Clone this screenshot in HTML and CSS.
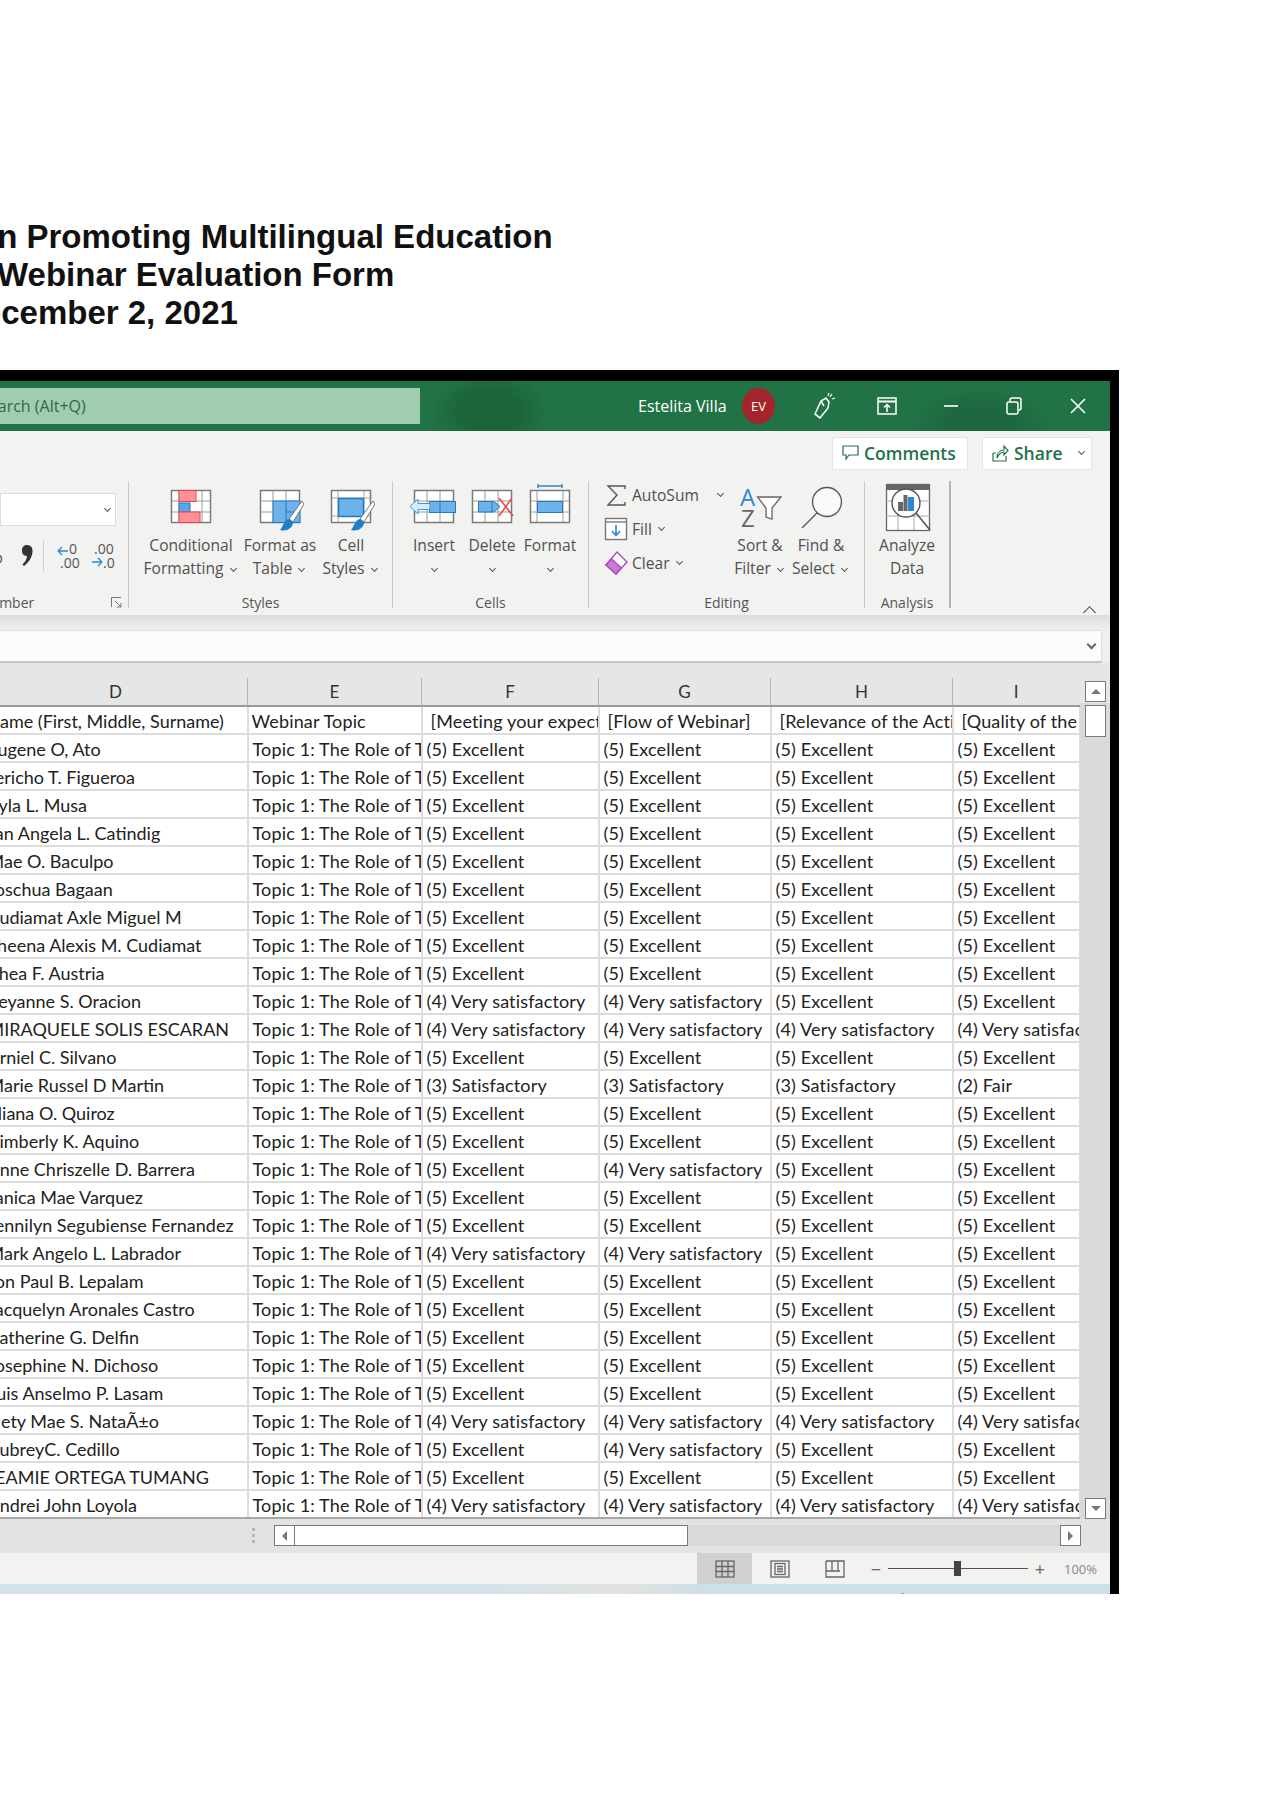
FILE: index.html
```html
<!DOCTYPE html>
<html lang="en">
<head>
    <meta charset="UTF-8">
    <title>Webinar Evaluation Form</title>
    <link rel="stylesheet" href="styles.css">
</head>
<body>

    <!-- Page heading -->
    <div class="heading">
        <div class="line-one">in Promoting Multilingual Education</div>
        <div class="line-two">Webinar Evaluation Form</div>
        <div class="line-three">December 2, 2021</div>
    </div>

    <!-- Excel window -->
    <div class="window">

        <div class="titlebar">
            <div class="search"><span>Search (Alt+Q)</span></div>
            <div class="user-name">Estelita Villa</div>
            <div class="avatar">EV</div>
            <div class="title-btn">
                <svg width="24" height="28" viewBox="0 0 24 28" fill="none" stroke="#fff" stroke-width="1.5"><path d="M3 22L9 9L14 6L17 10L16 16L8 26Z"/><path d="M3 22L8 26M12 14L9 9"/><path d="M18 5L20 2M20 7L23 6M16 4L17 1" stroke-width="1.2"/></svg>
            </div>
            <div class="title-btn">
                <svg width="20" height="18" viewBox="0 0 20 18" fill="none" stroke="#fff" stroke-width="1.5"><rect x="1" y="1" width="18" height="16"/><path d="M1 4.5H19" stroke-width="2"/><path d="M10 15V8M7 10.5L10 7.5L13 10.5"/></svg>
            </div>
            <div class="title-btn">
                <svg width="16" height="4" viewBox="0 0 16 4"><path d="M1 2H15" stroke="#fff" stroke-width="1.6"/></svg>
            </div>
            <div class="title-btn">
                <svg width="16" height="18" viewBox="0 0 16 18" fill="none" stroke="#fff" stroke-width="1.5"><rect x="1" y="5" width="11" height="12" rx="2"/><path d="M4 4V3Q4 1 6 1H13Q15 1 15 3V11Q15 13 13 13"/></svg>
            </div>
            <div class="title-btn">
                <svg width="16" height="16" viewBox="0 0 16 16"><path d="M1 1L15 15M15 1L1 15" stroke="#fff" stroke-width="1.6"/></svg>
            </div>
        </div>

        <div class="ribbon">
            <div class="ribbon-top">
                <div class="top-btn comments">
                    <svg width="17" height="17" viewBox="0 0 17 17" fill="none" stroke="#217346" stroke-width="1.2"><path d="M1 2H16V11H7L4 15V11H1Z"/></svg>
                    Comments
                </div>
                <div class="top-btn share">
                    <svg width="17" height="18" viewBox="0 0 17 18" fill="none" stroke="#217346" stroke-width="1.2"><path d="M1 9V17H14V12M1 9L4 9M5 14C5 9 8 6 12 6V2L16 6.5L12 11V8C9 8 7 10 5 14Z"/></svg>
                    Share <span class="chev chev-share"></span>
                </div>
            </div>

            <div class="groups">
                <!-- Number -->
                <div class="group group-number">
                    <div class="number-select"><span class="chev"></span></div>
                    <div class="number-row">
                        <span class="percent">%</span>
                        <svg class="comma" width="12" height="24" viewBox="0 0 12 24"><path d="M6 1C10 1 12 4 11.500 8C11 14 7 19 3 22L1.500 20.500C4 18 6 15 6 12C2 12 1 9 1 6.500C1 3 3 1 6 1Z" fill="#333"/></svg>
                        <span class="number-sep"></span>
                        <svg width="24" height="30" viewBox="0 0 24 30" class="decimal">
                            <text x="12" y="13" class="dec-text">0</text>
                            <text x="3" y="27" class="dec-text">.00</text>
                            <path d="M1 10H11M1 10L5 6M1 10L5 14" stroke="#2b88d8" stroke-width="1.400" fill="none"/>
                        </svg>
                        <svg width="24" height="30" viewBox="0 0 24 30" class="decimal decimal-last">
                            <text x="3" y="13" class="dec-text">.00</text>
                            <text x="12" y="27" class="dec-text">.0</text>
                            <path d="M1 21H11M11 21L7 17M11 21L7 25" stroke="#2b88d8" stroke-width="1.400" fill="none"/>
                        </svg>
                    </div>
                    <div class="group-label number-label">
                        <span>Number</span>
                        <svg width="11" height="11" viewBox="0 0 11 11" fill="none" stroke="#777"><path d="M0.500 10V0.500H10M4 4L10 10M6 10H10V6"/></svg>
                    </div>
                </div>

                <!-- Styles -->
                <div class="group group-styles">
                    <div class="big-row">
                        <div class="big-btn w96">
                            <svg width="44" height="52" viewBox="0 0 44 52">
                                <rect x="2.500" y="9.500" width="39" height="32" fill="#fff" stroke="#7a7a7a" stroke-width="1.500"/>
                                <path d="M10 10V41M33 10V41M3 20H41M3 31H41" stroke="#9a9a9a"/>
                                <rect x="10" y="9.500" width="17" height="11" fill="#ff9097" stroke="#e8474f"/>
                                <rect x="10" y="22" width="11" height="9" fill="#5aa5e2" stroke="#2579c4"/>
                                <rect x="10" y="31" width="21" height="10.500" fill="#ff9097" stroke="#e8474f"/>
                            </svg>
                            <div>Conditional</div>
                            <div>Formatting <span class="chev"></span></div>
                        </div>
                        <div class="big-btn w82">
                            <svg width="48" height="52" viewBox="0 0 48 52">
                                <rect x="4.500" y="9.500" width="39" height="32" fill="#fff" stroke="#7a7a7a" stroke-width="1.500"/>
                                <path d="M17 10V41M30 10V41M5 20H43M5 31H43" stroke="#9a9a9a"/>
                                <rect x="17" y="20" width="27" height="21.500" fill="#6db2ea" stroke="#2579c4"/>
                                <path d="M30 31H44M30 20V41" stroke="#2579c4"/>
                                <path d="M46 20L33 38L37 41L48 23Z" fill="#fff" stroke="#777"/>
                                <path d="M33 38C28 39 28 44 24 49C31 51 37 47 37 41Z" fill="#1f7fc9"/>
                            </svg>
                            <div>Format as</div>
                            <div>Table <span class="chev"></span></div>
                        </div>
                        <div class="big-btn w60">
                            <svg width="48" height="52" viewBox="0 0 48 52">
                                <rect x="4.500" y="9.500" width="39" height="32" fill="#fff" stroke="#7a7a7a" stroke-width="1.500"/>
                                <path d="M5 17H43M5 35H43M11 10V41M37 10V41" stroke="#a8a8a8"/>
                                <rect x="11.500" y="17.500" width="25" height="18" fill="#6db2ea" stroke="#2579c4" stroke-width="1.500"/>
                                <path d="M46 20L33 38L37 41L48 23Z" fill="#fff" stroke="#777"/>
                                <path d="M33 38C28 39 28 44 24 49C31 51 37 47 37 41Z" fill="#1f7fc9"/>
                            </svg>
                            <div>Cell</div>
                            <div>Styles <span class="chev"></span></div>
                        </div>
                    </div>
                    <div class="group-label">Styles</div>
                </div>

                <!-- Cells -->
                <div class="group group-cells">
                    <div class="big-row">
                        <div class="big-btn w58">
                            <svg width="52" height="52" viewBox="0 0 52 52">
                                <rect x="6.500" y="9.500" width="39" height="32" fill="#fff" stroke="#7a7a7a" stroke-width="1.500"/>
                                <path d="M19 10V41M32 10V41M7 20H45M7 31H45" stroke="#9a9a9a"/>
                                <rect x="21.500" y="20.500" width="26" height="11" fill="#6db2ea" stroke="#2579c4"/>
                                <path d="M32 20V31" stroke="#2579c4"/>
                                <path d="M22 22.500H10V18L2 25.500L10 33V28.500H22Z" fill="#d7ebfa" stroke="#3a9ad9"/>
                            </svg>
                            <div>Insert</div>
                            <div><span class="chev"></span></div>
                        </div>
                        <div class="big-btn w58">
                            <svg width="52" height="52" viewBox="0 0 52 52">
                                <rect x="6.500" y="9.500" width="39" height="32" fill="#fff" stroke="#7a7a7a" stroke-width="1.500"/>
                                <path d="M19 10V41M32 10V41M7 20H45M7 31H45" stroke="#9a9a9a"/>
                                <path d="M12.500 20.500H28L34 25.500L28 31H12.500Z" fill="#6db2ea" stroke="#2579c4"/>
                                <path d="M26 20V31" stroke="#2579c4"/>
                                <path d="M33 17L47 35M46 17L33 35" stroke="#ee4a50" stroke-width="1.600"/>
                            </svg>
                            <div>Delete</div>
                            <div><span class="chev"></span></div>
                        </div>
                        <div class="big-btn w58">
                            <svg width="52" height="52" viewBox="0 0 52 52">
                                <path d="M14 5H38M14 3V7M38 3V7" stroke="#2e86c9" stroke-width="1.400"/>
                                <rect x="6.500" y="9.500" width="39" height="32" fill="#fff" stroke="#7a7a7a" stroke-width="1.500"/>
                                <path d="M13 10V41M39 10V41M7 20H45M7 31H45" stroke="#9a9a9a"/>
                                <rect x="13.500" y="20.500" width="25" height="11" fill="#6db2ea" stroke="#2579c4"/>
                            </svg>
                            <div>Format</div>
                            <div><span class="chev"></span></div>
                        </div>
                    </div>
                    <div class="group-label">Cells</div>
                </div>

                <!-- Editing -->
                <div class="group group-editing">
                    <div class="big-row">
                        <div class="small-stack">
                            <div class="small-btn">
                                <svg width="24" height="26" viewBox="0 0 24 26" fill="none" stroke="#555" stroke-width="1.400"><path d="M21 7V4H4L13 13L4 23H21V20"/></svg>
                                AutoSum <span class="chev chev-auto"></span>
                            </div>
                            <div class="small-btn">
                                <svg width="24" height="24" viewBox="0 0 24 24"><rect x="1.500" y="1.500" width="21" height="21" fill="#fff" stroke="#777" stroke-width="1.400"/><path d="M2 5H22" stroke="#777" stroke-width="1.400"/><path d="M12 8V18M8 14L12 18.500L16 14" fill="none" stroke="#2b88d8" stroke-width="1.600"/></svg>
                                Fill <span class="chev"></span>
                            </div>
                            <div class="small-btn">
                                <svg width="24" height="26" viewBox="0 0 24 26"><path d="M13 2L23 12L12 24L2 15Z" fill="#fff" stroke="#b146c2" stroke-width="1.400"/><path d="M7.500 9L17.500 18L12 24L2 15Z" fill="#c77bd3" stroke="#b146c2" stroke-width="1.400"/></svg>
                                Clear <span class="chev"></span>
                            </div>
                        </div>
                        <div class="big-btn w62">
                            <svg width="44" height="52" viewBox="0 0 44 52">
                                <text x="2" y="25" class="sort-a">A</text>
                                <text x="3" y="46" class="sort-z">Z</text>
                                <path d="M19.500 16H43L34 27V38L28 36V27Z" fill="#fff" stroke="#666" stroke-width="1.300"/>
                            </svg>
                            <div>Sort &amp;</div>
                            <div>Filter <span class="chev"></span></div>
                        </div>
                        <div class="big-btn w60">
                            <svg width="48" height="52" viewBox="0 0 48 52">
                                <circle cx="30" cy="21" r="14.500" fill="#f9f9f9" stroke="#555" stroke-width="1.300"/>
                                <path d="M20 32L5 47" stroke="#555" stroke-width="1.300"/>
                            </svg>
                            <div>Find &amp;</div>
                            <div>Select <span class="chev"></span></div>
                        </div>
                    </div>
                    <div class="group-label">Editing</div>
                </div>

                <!-- Analysis -->
                <div class="group group-analysis">
                    <div class="big-row">
                        <div class="big-btn w86">
                            <svg width="50" height="52" viewBox="0 0 50 52">
                                <rect x="4.500" y="3.500" width="43" height="46" fill="#fff" stroke="#666" stroke-width="1.300"/>
                                <rect x="4" y="3" width="44" height="6" fill="#666"/>
                                <path d="M4 20H48M4 35H48M16 9V49M32 9V49" stroke="#aaa"/>
                                <circle cx="24" cy="22" r="14" fill="#fff" stroke="#555" stroke-width="1.400"/>
                                <rect x="16" y="21" width="5" height="9" fill="#666"/>
                                <rect x="21.500" y="14" width="4" height="16" fill="#666"/>
                                <rect x="26" y="16" width="6" height="14" fill="#2b88d8"/>
                                <path d="M34 32L48 49" stroke="#555" stroke-width="1.600"/>
                            </svg>
                            <div>Analyze</div>
                            <div>Data</div>
                        </div>
                    </div>
                    <div class="group-label">Analysis</div>
                </div>

                <div class="collapse"><span class="chev chev-up"></span></div>
            </div>
        </div>

        <div class="ribbon-shadow"></div>

        <div class="formula-bar">
            <div class="formula-box"><span class="chev chev-bold"></span></div>
        </div>

        <!-- Sheet -->
        <div class="sheet">
            <div class="grid-wrap">
                <table class="grid">
                    <colgroup>
                        <col class="col-d"><col class="col-e"><col class="col-f"><col class="col-g"><col class="col-h"><col class="col-i">
                    </colgroup>
                    <tr class="letters"><th>D</th><th>E</th><th>F</th><th>G</th><th>H</th><th>I</th></tr>
                    <tr class="head-row"><td>Name (First, Middle, Surname)</td><td class="plain">Webinar Topic</td><td>[Meeting your expectations]</td><td>[Flow of Webinar]</td><td>[Relevance of the Activity]</td><td>[Quality of the Speakers]</td></tr>
                    <tr><td>Eugene O, Ato</td><td>Topic 1: The Role of Translation</td><td>(5) Excellent</td><td>(5) Excellent</td><td>(5) Excellent</td><td>(5) Excellent</td></tr>
                    <tr><td>Jericho T. Figueroa</td><td>Topic 1: The Role of Translation</td><td>(5) Excellent</td><td>(5) Excellent</td><td>(5) Excellent</td><td>(5) Excellent</td></tr>
                    <tr><td>Kyla L. Musa</td><td>Topic 1: The Role of Translation</td><td>(5) Excellent</td><td>(5) Excellent</td><td>(5) Excellent</td><td>(5) Excellent</td></tr>
                    <tr><td>Jan Angela L. Catindig</td><td>Topic 1: The Role of Translation</td><td>(5) Excellent</td><td>(5) Excellent</td><td>(5) Excellent</td><td>(5) Excellent</td></tr>
                    <tr><td>Mae O. Baculpo</td><td>Topic 1: The Role of Translation</td><td>(5) Excellent</td><td>(5) Excellent</td><td>(5) Excellent</td><td>(5) Excellent</td></tr>
                    <tr><td>Joschua Bagaan</td><td>Topic 1: The Role of Translation</td><td>(5) Excellent</td><td>(5) Excellent</td><td>(5) Excellent</td><td>(5) Excellent</td></tr>
                    <tr><td>Cudiamat Axle Miguel M</td><td>Topic 1: The Role of Translation</td><td>(5) Excellent</td><td>(5) Excellent</td><td>(5) Excellent</td><td>(5) Excellent</td></tr>
                    <tr><td>Sheena Alexis M. Cudiamat</td><td>Topic 1: The Role of Translation</td><td>(5) Excellent</td><td>(5) Excellent</td><td>(5) Excellent</td><td>(5) Excellent</td></tr>
                    <tr><td>Rhea F. Austria</td><td>Topic 1: The Role of Translation</td><td>(5) Excellent</td><td>(5) Excellent</td><td>(5) Excellent</td><td>(5) Excellent</td></tr>
                    <tr><td>Reyanne S. Oracion</td><td>Topic 1: The Role of Translation</td><td>(4) Very satisfactory</td><td>(4) Very satisfactory</td><td>(5) Excellent</td><td>(5) Excellent</td></tr>
                    <tr><td>MIRAQUELE SOLIS ESCARAN</td><td>Topic 1: The Role of Translation</td><td>(4) Very satisfactory</td><td>(4) Very satisfactory</td><td>(4) Very satisfactory</td><td>(4) Very satisfactory</td></tr>
                    <tr><td>Arniel C. Silvano</td><td>Topic 1: The Role of Translation</td><td>(5) Excellent</td><td>(5) Excellent</td><td>(5) Excellent</td><td>(5) Excellent</td></tr>
                    <tr><td>Marie Russel D Martin</td><td>Topic 1: The Role of Translation</td><td>(3) Satisfactory</td><td>(3) Satisfactory</td><td>(3) Satisfactory</td><td>(2) Fair</td></tr>
                    <tr><td>Eliana O. Quiroz</td><td>Topic 1: The Role of Translation</td><td>(5) Excellent</td><td>(5) Excellent</td><td>(5) Excellent</td><td>(5) Excellent</td></tr>
                    <tr><td>Kimberly K. Aquino</td><td>Topic 1: The Role of Translation</td><td>(5) Excellent</td><td>(5) Excellent</td><td>(5) Excellent</td><td>(5) Excellent</td></tr>
                    <tr><td>Anne Chriszelle D. Barrera</td><td>Topic 1: The Role of Translation</td><td>(5) Excellent</td><td>(4) Very satisfactory</td><td>(5) Excellent</td><td>(5) Excellent</td></tr>
                    <tr><td>Janica Mae Varquez</td><td>Topic 1: The Role of Translation</td><td>(5) Excellent</td><td>(5) Excellent</td><td>(5) Excellent</td><td>(5) Excellent</td></tr>
                    <tr><td>Jennilyn Segubiense Fernandez</td><td>Topic 1: The Role of Translation</td><td>(5) Excellent</td><td>(5) Excellent</td><td>(5) Excellent</td><td>(5) Excellent</td></tr>
                    <tr><td>Mark Angelo L. Labrador</td><td>Topic 1: The Role of Translation</td><td>(4) Very satisfactory</td><td>(4) Very satisfactory</td><td>(5) Excellent</td><td>(5) Excellent</td></tr>
                    <tr><td>Jon Paul B. Lepalam</td><td>Topic 1: The Role of Translation</td><td>(5) Excellent</td><td>(5) Excellent</td><td>(5) Excellent</td><td>(5) Excellent</td></tr>
                    <tr><td>Jacquelyn Aronales Castro</td><td>Topic 1: The Role of Translation</td><td>(5) Excellent</td><td>(5) Excellent</td><td>(5) Excellent</td><td>(5) Excellent</td></tr>
                    <tr><td>Catherine G. Delfin</td><td>Topic 1: The Role of Translation</td><td>(5) Excellent</td><td>(5) Excellent</td><td>(5) Excellent</td><td>(5) Excellent</td></tr>
                    <tr><td>Josephine N. Dichoso</td><td>Topic 1: The Role of Translation</td><td>(5) Excellent</td><td>(5) Excellent</td><td>(5) Excellent</td><td>(5) Excellent</td></tr>
                    <tr><td>Luis Anselmo P. Lasam</td><td>Topic 1: The Role of Translation</td><td>(5) Excellent</td><td>(5) Excellent</td><td>(5) Excellent</td><td>(5) Excellent</td></tr>
                    <tr><td>Nety Mae S. NataÃ±o</td><td>Topic 1: The Role of Translation</td><td>(4) Very satisfactory</td><td>(4) Very satisfactory</td><td>(4) Very satisfactory</td><td>(4) Very satisfactory</td></tr>
                    <tr><td>AubreyC. Cedillo</td><td>Topic 1: The Role of Translation</td><td>(5) Excellent</td><td>(4) Very satisfactory</td><td>(5) Excellent</td><td>(5) Excellent</td></tr>
                    <tr><td>JEAMIE ORTEGA TUMANG</td><td>Topic 1: The Role of Translation</td><td>(5) Excellent</td><td>(5) Excellent</td><td>(5) Excellent</td><td>(5) Excellent</td></tr>
                    <tr><td>Andrei John Loyola</td><td>Topic 1: The Role of Translation</td><td>(4) Very satisfactory</td><td>(4) Very satisfactory</td><td>(4) Very satisfactory</td><td>(4) Very satisfactory</td></tr>
                </table>
            </div>
            <div class="vscroll">
                <div class="scroll-btn"><span class="tri tri-up"></span></div>
                <div class="vthumb"></div>
                <div class="vtrack"></div>
                <div class="scroll-btn"><span class="tri tri-down"></span></div>
            </div>
        </div>

        <!-- Horizontal scrollbar -->
        <div class="hscroll">
            <div class="hdots"></div>
            <div class="scroll-btn"><span class="tri tri-left"></span></div>
            <div class="hthumb"></div>
            <div class="htrack"></div>
            <div class="scroll-btn"><span class="tri tri-right"></span></div>
        </div>

        <!-- Status bar -->
        <div class="statusbar">
            <div class="view-btn view-on">
                <svg width="20" height="18" viewBox="0 0 20 18" fill="none" stroke="#666" stroke-width="1.300"><rect x="1" y="1" width="18" height="16"/><path d="M7 1V17M13 1V17M1 6.500H19M1 11.500H19"/></svg>
            </div>
            <div class="view-btn">
                <svg width="20" height="18" viewBox="0 0 20 18" fill="none" stroke="#666" stroke-width="1.300"><rect x="1" y="1" width="18" height="16"/><rect x="5" y="3.500" width="10" height="11"/><path d="M7 6.500H13M7 9H13M7 11.500H13"/></svg>
            </div>
            <div class="view-btn view-last">
                <svg width="20" height="18" viewBox="0 0 20 18" fill="none" stroke="#666" stroke-width="1.300"><path d="M1 1H19V17H1V11"/><path d="M1 11H15M1 1V11M7 1V11M13 1V11"/></svg>
            </div>
            <span class="zoom-mark">&minus;</span>
            <div class="slider"><span class="slider-thumb"></span></div>
            <span class="zoom-mark">+</span>
            <span class="zoom-pct">100%</span>
        </div>

        <div class="taskstrip"><span>Edit</span></div>
    </div>

</body>
</html>
```

FILE: styles.css
```css
body {
    margin: 0;
    padding: 0;
    background-color: #fff;
    overflow: hidden;
    font-family: "Open Sans", sans-serif;
}

/* Heading */
.heading {
    padding-top: 218px;
    font-family: "Liberation Sans", Arial, sans-serif;
    font-weight: bold;
    font-size: 33px;
    line-height: 38px;
    color: #111;
    white-space: nowrap;
}

.line-one {
    margin-left: -12px;
}

.line-two {
    margin-left: -3px;
}

.line-three {
    margin-left: -41px;
}

/* Window */
.window {
    margin-top: 38px;
    width: 1110px;
    border-top: 11px solid #000;
    border-right: 9px solid #000;
    background-color: #f1f1f1;
}

.titlebar {
    display: flex;
    align-items: center;
    height: 50px;
    background-color: #217346;
    background-image: radial-gradient(ellipse 60px 40px at 490px 30px, #1c6339 45%, transparent 100%),
        radial-gradient(ellipse 70px 40px at 980px 45px, #1d683f 50%, transparent 100%);
    color: #fff;
    white-space: nowrap;
}

.search {
    width: 420px;
    height: 36px;
    line-height: 36px;
    background-color: #a0cdb0;
    color: #2c6b4a;
    font-size: 16px;
    overflow: hidden;
    flex-shrink: 0;
}

.search span {
    margin-left: -20px;
    display: inline-block;
}

.user-name {
    margin-left: 218px;
    width: 89px;
    font-size: 16px;
    flex-shrink: 0;
}

.avatar {
    margin-left: 15px;
    margin-right: 17px;
    width: 33px;
    height: 36px;
    line-height: 36px;
    border-radius: 50%;
    background-color: #a4262c;
    text-align: center;
    font-size: 13px;
    flex-shrink: 0;
}

.title-btn {
    width: 63.500px;
    display: flex;
    justify-content: center;
    align-items: center;
    flex-shrink: 0;
}

/* Ribbon */
.ribbon {
    height: 184px;
    background-color: #f2f2f1;
    color: #505050;
    font-size: 15.600px;
}

.ribbon-top {
    height: 50px;
    display: flex;
    justify-content: flex-end;
    align-items: flex-start;
    padding-top: 6px;
    padding-right: 18px;
    gap: 14px;
    box-sizing: border-box;
}

.top-btn {
    height: 33px;
    box-sizing: border-box;
    background-color: #fff;
    border: 1px solid #e4e4e4;
    border-radius: 2px;
    color: #217346;
    font-size: 17.500px;
    font-weight: 600;
    display: flex;
    align-items: center;
    gap: 5px;
    padding-bottom: 2px;
}

.comments {
    width: 136px;
    padding-left: 9px;
}

.share {
    width: 110px;
    padding-left: 9px;
}

.groups {
    display: flex;
    height: 127px;
}

.group {
    display: flex;
    flex-direction: column;
    box-sizing: border-box;
    border-right: 1px solid #c8c8c8;
    flex-shrink: 0;
}

.group-number {
    width: 129px;
}

.group-styles {
    width: 264px;
}

.group-cells {
    width: 196px;
}

.group-editing {
    width: 276px;
}

.group-analysis {
    width: 86px;
    border-right: 2px solid #b5b5b5;
}

.group-label {
    margin-top: auto;
    height: 14px;
    line-height: 18px;
    font-size: 14px;
    text-align: center;
    color: #555;
}

.number-select {
    margin-top: 12px;
    width: 116px;
    height: 33px;
    box-sizing: border-box;
    background-color: #fff;
    border: 1px solid #dcdcdc;
    display: flex;
    justify-content: flex-end;
    align-items: center;
    padding-right: 2px;
}

.number-row {
    display: flex;
    align-items: center;
    margin-top: 12px;
    height: 36px;
}

.percent {
    margin-left: -12px;
    width: 21px;
    font-size: 18px;
    flex-shrink: 0;
}

.comma {
    margin-left: 12px;
    flex-shrink: 0;
}

.number-sep {
    margin-left: 10px;
    width: 1px;
    height: 32px;
    background-color: #cfcfcf;
    flex-shrink: 0;
}

.decimal {
    margin-left: 13px;
    flex-shrink: 0;
}

.decimal-last {
    margin-left: 10px;
}

.dec-text {
    font-family: "Open Sans", sans-serif;
    font-size: 14px;
    fill: #555;
}

.number-label {
    display: flex;
    justify-content: space-between;
    padding-right: 6px;
    overflow: visible;
}

.number-label span {
    margin-left: -20px;
}

.number-label svg {
    margin-top: 3px;
}

.big-row {
    display: flex;
    align-items: flex-start;
}

.group-styles .big-row {
    padding-left: 14px;
}

.group-cells .big-row {
    padding-left: 12px;
}

.group-editing .big-row {
    padding-left: 15px;
}

.big-btn {
    display: flex;
    flex-direction: column;
    align-items: center;
    text-align: center;
    line-height: 23px;
    white-space: nowrap;
    flex-shrink: 0;
}

.big-btn svg {
    margin-bottom: 1px;
}

.w96 { width: 96px; }
.w86 { width: 84px; }
.w82 { width: 82px; }
.w62 { width: 62px; }
.w60 { width: 60px; }
.w58 { width: 58px; }

.small-stack {
    width: 125px;
    flex-shrink: 0;
    margin-top: -3px;
}

.small-btn {
    display: flex;
    align-items: center;
    gap: 4px;
    height: 34px;
    white-space: nowrap;
}

.collapse {
    margin-left: auto;
    padding-right: 16px;
    align-self: flex-end;
    height: 8px;
}

/* Small dropdown arrow */
.chev {
    display: inline-block;
    width: 4px;
    height: 4px;
    border-right: 1.500px solid #555;
    border-bottom: 1.500px solid #555;
    transform: rotate(45deg);
    margin: 0 3px 3px 3px;
}

.chev-auto {
    margin-left: 15px;
}

.chev-share {
    margin-left: 11px;
}

.chev-up {
    width: 8px;
    height: 8px;
    border-right: none;
    border-bottom: none;
    border-left: 1.500px solid #444;
    border-top: 1.500px solid #444;
    margin: 0;
}

.chev-bold {
    width: 5px;
    height: 5px;
    border-width: 2px;
    border-color: #666;
}

.sort-a {
    font-family: "Open Sans", sans-serif;
    font-size: 24px;
    fill: #2b88d8;
}

.sort-z {
    font-family: "Open Sans", sans-serif;
    font-size: 24px;
    fill: #666;
}

.ribbon-shadow {
    height: 15px;
    background: linear-gradient(#dcdcdc, #efefef);
}

.formula-bar {
    height: 33px;
    padding-right: 8px;
    background-color: #efefef;
}

.formula-box {
    height: 33px;
    box-sizing: border-box;
    background-color: #fcfcfc;
    border-top: 1px solid #e0e0e0;
    border-right: 1px solid #e0e0e0;
    border-bottom: 2px solid #c6c6c6;
    display: flex;
    justify-content: flex-end;
    align-items: center;
    padding-right: 3px;
}

/* Sheet */
.sheet {
    display: flex;
    background-color: #e6e6e6;
}

.grid-wrap {
    width: 1080px;
    padding-top: 15px;
    overflow: hidden;
    flex-shrink: 0;
}

.grid {
    margin-left: -17px;
    width: 1096px;
    table-layout: fixed;
    border-collapse: collapse;
    font-family: Lato, sans-serif;
    font-size: 18px;
    color: #222;
}

.col-d { width: 264px; }
.col-e { width: 174px; }
.col-f { width: 177px; }
.col-g { width: 172px; }
.col-h { width: 182px; }
.col-i { width: 127px; }

.grid th {
    height: 28px;
    padding: 0;
    font-weight: normal;
    font-size: 17px;
    color: #333;
    border-left: 1px solid #b5b5b5;
    border-bottom: 2px solid #9a9a9a;
    box-sizing: border-box;
}

.grid td {
    height: 28px;
    box-sizing: border-box;
    padding: 2px 0 0 4px;
    background-color: #fff;
    border-right: 2px solid #dcdcdc;
    border-bottom: 2px solid #dcdcdc;
    white-space: nowrap;
    overflow: hidden;
    letter-spacing: 0.15px;
}

.grid td:first-child {
    letter-spacing: 0;
}

.head-row td {
    padding-left: 8px;
}

.head-row td:first-child,
.head-row td.plain {
    padding-left: 3px;
}

.grid tr:last-child td {
    border-bottom: 2px solid #a8a8a8;
}

.vscroll {
    width: 30px;
    box-sizing: border-box;
    padding: 18px 4px 0 5px;
    display: flex;
    flex-direction: column;
    background: linear-gradient(#e6e6e6 40px, #dadada 40px);
}

.scroll-btn {
    box-sizing: border-box;
    width: 21px;
    height: 21px;
    background-color: #fff;
    border: 1.500px solid #7b7b7b;
    display: flex;
    justify-content: center;
    align-items: center;
    flex-shrink: 0;
}

.vthumb {
    margin-top: 3px;
    height: 32px;
    box-sizing: border-box;
    background-color: #fff;
    border: 1.500px solid #7b7b7b;
}

.vtrack {
    flex-grow: 1;
}

.tri {
    width: 0;
    height: 0;
    display: block;
}

.tri-up {
    border-left: 5px solid transparent;
    border-right: 5px solid transparent;
    border-bottom: 5px solid #777;
}

.tri-down {
    border-left: 5px solid transparent;
    border-right: 5px solid transparent;
    border-top: 5px solid #777;
}

.tri-left {
    border-top: 5px solid transparent;
    border-bottom: 5px solid transparent;
    border-right: 5px solid #777;
}

.tri-right {
    border-top: 5px solid transparent;
    border-bottom: 5px solid transparent;
    border-left: 5px solid #777;
}

/* Horizontal scrollbar */
.hscroll {
    height: 34px;
    box-sizing: border-box;
    padding: 6px 29px 7px 252px;
    display: flex;
    background-color: #e3e3e3;
}

.hdots {
    width: 22px;
    height: 15px;
    margin-top: 3px;
    box-sizing: border-box;
    border-left: 3px dotted #b5b5b5;
    flex-shrink: 0;
}

.hthumb {
    width: 393px;
    box-sizing: border-box;
    background-color: #fff;
    border: 1.500px solid #7b7b7b;
    border-left: none;
    flex-shrink: 0;
}

.htrack {
    flex-grow: 1;
    background-color: #d9d9d9;
}

/* Status bar */
.statusbar {
    height: 31px;
    padding-left: 697px;
    display: flex;
    align-items: center;
    background-color: #f2f2f1;
    color: #777;
}

.view-btn {
    width: 55px;
    height: 31px;
    display: flex;
    justify-content: center;
    align-items: center;
    flex-shrink: 0;
}

.view-on {
    background-color: #d0d0d0;
}

.view-last {
    margin-right: 2px;
}

.zoom-mark {
    width: 24px;
    text-align: center;
    font-size: 18px;
    color: #666;
    flex-shrink: 0;
}

.slider {
    width: 140px;
    height: 1px;
    background-color: #555;
    position: relative;
    flex-shrink: 0;
}

.slider-thumb {
    position: absolute;
    left: 66px;
    top: -7px;
    width: 7px;
    height: 15px;
    background-color: #444;
}

.zoom-pct {
    margin-left: 12px;
    font-size: 13px;
    color: #888;
    flex-shrink: 0;
}

.taskstrip {
    height: 10px;
    overflow: hidden;
    background: linear-gradient(90deg, #d3e3ea 0, #d3e3ea 480px, #e2e2e0 620px, #cddfe7 700px);
    box-sizing: border-box;
}

.taskstrip span {
    display: block;
    margin-left: 888px;
    margin-top: 7px;
    font-size: 14px;
    line-height: 16px;
    color: #555;
}
```
